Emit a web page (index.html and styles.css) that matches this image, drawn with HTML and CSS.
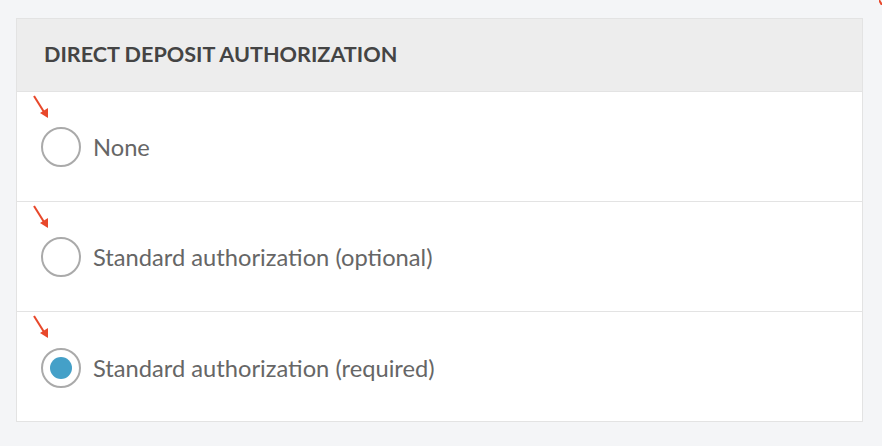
FILE: index.html
```html
<!DOCTYPE html>
<html lang="en">
<head>
  <meta charset="UTF-8" />
  <title>Direct Deposit Authorization</title>
  <link rel="stylesheet" href="styles.css">
</head>
<body>
  <svg class="corner-arrow" width="3" height="5" viewBox="0 0 3 5"><line x1="0" y1="0" x2="3" y2="5" stroke="#e8482b" stroke-width="2"/></svg>
  <div class="panel">
    <div class="panel-head">DIRECT DEPOSIT AUTHORIZATION</div>

    <label class="option">
      <svg class="hint" width="18" height="26" viewBox="0 0 18 26"><line x1="1" y1="1" x2="11" y2="17" stroke="#e8482b" stroke-width="2"/><polygon points="7,18 15,23 15,13" fill="#e8482b"/></svg>
      <input type="radio" name="dd" />
      <span class="radio"></span>
      <span class="text">None</span>
    </label>

    <label class="option">
      <svg class="hint" width="18" height="26" viewBox="0 0 18 26"><line x1="1" y1="1" x2="11" y2="17" stroke="#e8482b" stroke-width="2"/><polygon points="7,18 15,23 15,13" fill="#e8482b"/></svg>
      <input type="radio" name="dd" />
      <span class="radio"></span>
      <span class="text">Standard authorization (optional)</span>
    </label>

    <label class="option">
      <svg class="hint" width="18" height="26" viewBox="0 0 18 26"><line x1="1" y1="1" x2="11" y2="17" stroke="#e8482b" stroke-width="2"/><polygon points="7,18 15,23 15,13" fill="#e8482b"/></svg>
      <input type="radio" name="dd" checked />
      <span class="radio"></span>
      <span class="text">Standard authorization (required)</span>
    </label>
  </div>
</body>
</html>
```

FILE: styles.css
```css
body {
  font-family: Lato, 'Open Sans', sans-serif;
  background: #f4f5f7;
  margin: 0;
  padding: 18px 19px 0 16px;
  color: #666;
}
.corner-arrow {
  position: absolute;
  top: 0;
  right: 0;
}
.panel {
  background: white;
  border: 1px solid #e3e3e3;
  height: 404px;
  box-sizing: border-box;
}
.panel-head {
  background: #ededed;
  height: 73px;
  box-sizing: border-box;
  padding: 22px 0 0 27px;
  font-size: 21.6px;
  font-weight: bold;
  color: #444;
  border-bottom: 1px solid #e3e3e3;
}
.option {
  position: relative;
  display: flex;
  align-items: center;
  height: 110px;
  box-sizing: border-box;
  padding: 1px 0 0 24px;
  border-bottom: 1px solid #e3e3e3;
  cursor: pointer;
}
.option:last-child {
  border-bottom: none;
}
.option input {
  display: none;
}
.hint {
  position: absolute;
  left: 16px;
  top: 3px;
}
.radio {
  width: 40px;
  height: 40px;
  box-sizing: border-box;
  border: 2px solid #aaa;
  border-radius: 50%;
  background: white;
  display: flex;
  align-items: center;
  justify-content: center;
}
.option input:checked + .radio::after {
  content: '';
  width: 22px;
  height: 22px;
  border-radius: 50%;
  background: #44a0c8;
}
.text {
  margin-left: 12px;
  font-size: 23.7px;
  color: #666;
}
```
